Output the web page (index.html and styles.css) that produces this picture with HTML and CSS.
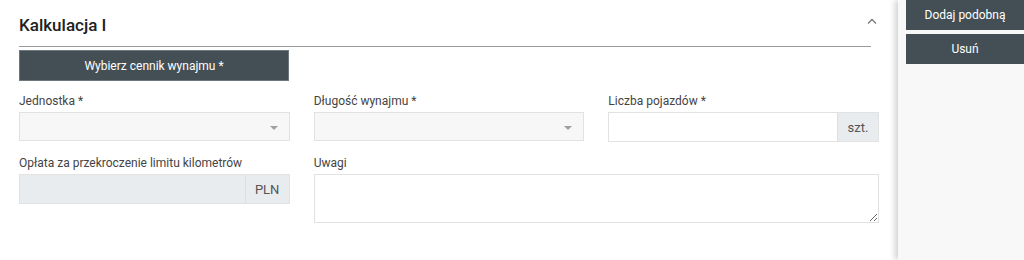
FILE: index.html
```html
<!DOCTYPE html>
<html lang="pl">

<head>
    <meta charset="UTF-8">
    <title>Kalkulacja</title>
    <link rel="stylesheet" href="styles.css">
</head>

<body>
    <div id="page">
        <!-- Main form panel -->
        <div id="calc-panel">
            <div class="panel-header">
                <h2>Kalkulacja I</h2>
                <svg class="chevron" width="10" height="6" viewBox="0 0 10 6">
                    <path d="M1 5.5 L5 1.5 L9 5.5" fill="none" stroke="#777" stroke-width="1.3" />
                </svg>
            </div>
            <button class="btn-dark btn-pricelist">Wybierz cennik wynajmu *</button>

            <div class="form-grid">
                <div class="field">
                    <label>Jednostka *</label>
                    <div class="select-box"><span class="caret"></span></div>
                </div>
                <div class="field">
                    <label>Długość wynajmu *</label>
                    <div class="select-box"><span class="caret"></span></div>
                </div>
                <div class="field">
                    <label>Liczba pojazdów *</label>
                    <div class="input-group">
                        <input type="text">
                        <span class="addon addon-szt">szt.</span>
                    </div>
                </div>
                <div class="field">
                    <label>Opłata za przekroczenie limitu kilometrów</label>
                    <div class="input-group disabled">
                        <input type="text" disabled>
                        <span class="addon addon-pln">PLN</span>
                    </div>
                </div>
                <div class="field field-wide">
                    <label>Uwagi</label>
                    <textarea></textarea>
                </div>
            </div>
        </div>

        <!-- Side actions -->
        <div id="side-actions">
            <button class="btn-dark btn-side">Dodaj podobną</button>
            <button class="btn-dark btn-side">Usuń</button>
        </div>
    </div>
</body>

</html>
```

FILE: styles.css
```css
/* General reset */
* {
    margin: 0;
    padding: 0;
    box-sizing: border-box;
}

body {
    font-family: Roboto, "Liberation Sans", sans-serif;
    background: #ffffff;
    height: 260px;
    overflow: hidden;
}

#page {
    display: flex;
    height: 100%;
}

/* Form panel */
#calc-panel {
    width: 898px;
    padding: 0 19px;
    background: #fff;
}

.panel-header {
    display: flex;
    justify-content: space-between;
    align-items: flex-start;
    padding: 15px 0 11px;
    margin-right: 8px;
    border-bottom: 1px solid #9a9a9a;
}

.panel-header h2 {
    font-size: 17px;
    font-weight: 500;
    line-height: 20px;
    color: #212121;
}

.chevron {
    margin-top: 3px;
    margin-right: -6px;
}

/* Dark buttons */
.btn-dark {
    font-family: Roboto, "Liberation Sans", sans-serif;
    background: #434f55;
    color: #fff;
    font-size: 12px;
    border: 1px solid #6f787c;
    cursor: pointer;
}

.btn-pricelist {
    display: block;
    width: 270px;
    height: 31px;
    margin-top: 3px;
}

/* Fields */
.form-grid {
    display: grid;
    grid-template-columns: repeat(3, 1fr);
    column-gap: 24px;
    row-gap: 13px;
    margin-top: 12px;
}

.field label {
    display: block;
    font-size: 12px;
    line-height: 17px;
    color: #444;
    margin-bottom: 2px;
}

.field-wide {
    grid-column: span 2;
}

.select-box {
    position: relative;
    height: 29px;
    background: #f7f7f7;
    border: 1px solid #e2e2e2;
}

.caret {
    position: absolute;
    right: 11px;
    top: 13px;
    border-left: 4px solid transparent;
    border-right: 4px solid transparent;
    border-top: 4px solid #a0a0a0;
}

.input-group {
    display: flex;
    height: 30px;
    border: 1px solid #e2e2e2;
}

.input-group input {
    flex: 1;
    min-width: 0;
    border: none;
    background: #fff;
    outline: none;
}

.input-group.disabled input {
    background: #e9ecef;
}

.addon {
    display: flex;
    align-items: center;
    justify-content: center;
    background: #e9ecef;
    border-left: 1px solid #dcdfe2;
    color: #555;
    font-size: 13px;
}

.addon-szt {
    width: 41px;
}

.addon-pln {
    width: 44px;
}

textarea {
    display: block;
    width: 100%;
    height: 49px;
    border: 1px solid #e2e2e2;
    resize: vertical;
    outline: none;
    font-family: Roboto, "Liberation Sans", sans-serif;
}

/* Side actions */
#side-actions {
    flex: 1;
    display: flex;
    flex-direction: column;
    gap: 4px;
    padding-left: 8px;
    background: #f8f8f8;
    box-shadow: -3px 0 6px rgba(0, 0, 0, 0.18);
}

.btn-side {
    height: 30px;
    font-size: 12px;
    border: none;
}
```
